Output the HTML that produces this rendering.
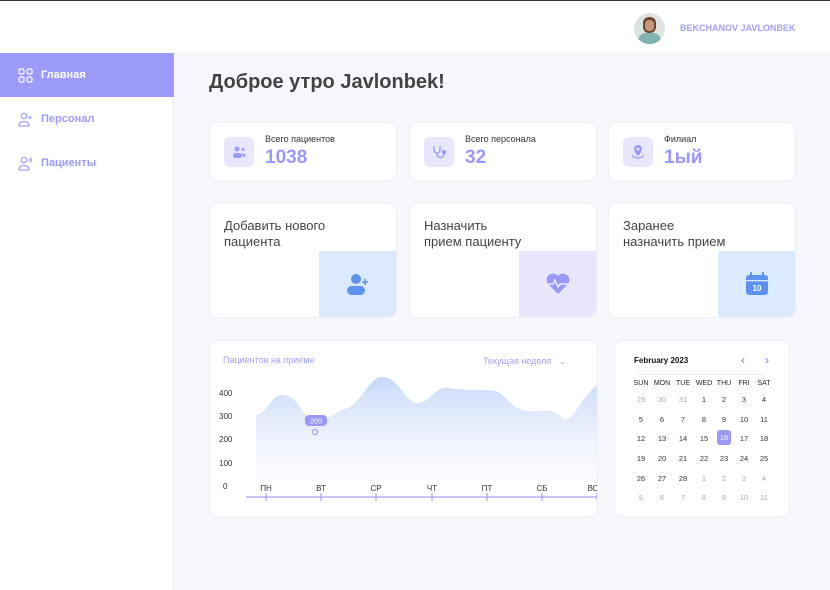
<!DOCTYPE html>
<html><head><meta charset="utf-8"><style>
*{margin:0;padding:0;box-sizing:border-box}
body{width:830px;height:590px;overflow:hidden;font-family:"Liberation Sans",sans-serif;background:#f7f7fd;position:relative}
.hdr{position:absolute;left:0;top:0;width:830px;height:52px;background:#fff;border-top:1px solid #333}
.side{position:absolute;left:0;top:52px;width:174px;height:538px;background:#fff;border-right:1px solid #ececf5}
.nav{position:absolute;left:0;width:174px;height:44px;display:flex;align-items:center;padding-left:18px;font-size:11px;font-weight:bold;color:#9d9bfb}
.nav svg{margin-right:8px}
.card{position:absolute;background:#fff;border-radius:8px;border:1px solid #eeeef6}
.ic{position:absolute;left:14px;top:14px;width:30px;height:30px;border-radius:6px;background:#e8e7fd;display:flex;align-items:center;justify-content:center}
.lbl{position:absolute;left:55px;top:11px;font-size:9px;color:#333}
.num{position:absolute;left:55px;top:24px;font-size:19px;font-weight:bold;color:#9a98f8}
.at{position:absolute;left:14px;top:14px;font-size:13px;color:#444;line-height:16px}
.box{position:absolute;right:0;bottom:0;width:77px;height:66px;border-radius:0 0 8px 0;display:flex;align-items:center;justify-content:center}
.cal{font-size:7.5px;color:#333}
.cal span{position:absolute;width:20px;text-align:center}
.g{color:#aaa!important}
</style></head><body>
<div class="hdr">
<div style="position:absolute;left:634px;top:12px;width:31px;height:31px;border-radius:50%;background:#dfe3e0;overflow:hidden">
<div style="position:absolute;left:9px;top:4px;width:13px;height:16px;border-radius:6px;background:#6a4431"></div>
<div style="position:absolute;left:11px;top:7px;width:9px;height:11px;border-radius:4px;background:#c9957a"></div>
<div style="position:absolute;left:4px;top:20px;width:23px;height:14px;border-radius:8px 8px 0 0;background:#7fb3b0"></div>
</div>
<div style="position:absolute;left:680px;top:22px;font-size:9px;font-weight:bold;color:#a3a1fb">BEKCHANOV JAVLONBEK</div>
</div>
<div class="side">
<div class="nav" style="top:1px;background:#9c9afb;color:#fff"><svg width="15" height="15" viewBox="0 0 15 15" fill="none" stroke="#fff" stroke-width="1.2"><rect x="1" y="1" width="5" height="5" rx="1.5"/><rect x="9" y="1" width="5" height="5" rx="1.5"/><rect x="1" y="9" width="5" height="5" rx="1.5"/><rect x="9" y="9" width="5" height="5" rx="1.5"/></svg>Главная</div>
<div class="nav" style="top:45px"><svg width="15" height="15" viewBox="0 0 15 15" fill="none" stroke="#a3a1fb" stroke-width="1.2"><circle cx="6" cy="4" r="2.8"/><path d="M1 14c0-3 2-4.5 5-4.5s5 1.5 5 4.5z"/><path d="M12 4v3M10.5 5.5h3"/></svg>Персонал</div>
<div class="nav" style="top:89px"><svg width="15" height="15" viewBox="0 0 15 15" fill="none" stroke="#a3a1fb" stroke-width="1.2"><circle cx="6" cy="4" r="2.8"/><path d="M1 14c0-3 2-4.5 5-4.5s5 1.5 5 4.5z"/><path d="M11 2.5q1 1.5 0 3M12.5 1.5q2 2.5 0 5"/></svg>Пациенты</div>
</div>
<div style="position:absolute;left:209px;top:71px;font-size:20px;font-weight:bold;color:#444">Доброе утро Javlonbek!</div>

<div class="card" style="left:209px;top:122px;width:188px;height:59px"><div class="ic"><svg width="14" height="14" viewBox="0 0 14 14" fill="#9a98f8"><circle cx="5" cy="4" r="2.5"/><rect x="1" y="8" width="9" height="5" rx="2.5"/><circle cx="11" cy="4.5" r="1.5"/><rect x="10.5" y="8.5" width="3" height="3.5" rx="1.5"/></svg></div><div class="lbl">Всего пациентов</div><div class="num">1038</div></div>
<div class="card" style="left:409px;top:122px;width:188px;height:59px"><div class="ic"><svg width="16" height="16" viewBox="0 0 16 16" fill="none" stroke="#9a98f8" stroke-width="1.3"><path d="M3 2v4a3 3 0 0 0 6 0V2"/><path d="M6 9v1a3.5 3.5 0 0 0 7 0V9"/><circle cx="13" cy="8" r="1.5" fill="#9a98f8"/></svg></div><div class="lbl">Всего персонала</div><div class="num">32</div></div>
<div class="card" style="left:608px;top:122px;width:188px;height:59px"><div class="ic"><svg width="16" height="16" viewBox="0 0 16 16"><path d="M8 1a4 4 0 0 1 4 4c0 3-4 7-4 7s-4-4-4-7a4 4 0 0 1 4-4z" fill="#9a98f8"/><circle cx="8" cy="5" r="1.5" fill="#e8e7fd"/><path d="M3 11q-2 2 5 3q7-1 5-3" fill="none" stroke="#9a98f8" stroke-width="1.2"/></svg></div><div class="lbl">Филиал</div><div class="num">1ый</div></div>

<div class="card" style="left:209px;top:203px;width:188px;height:115px"><div class="at">Добавить нового<br>пациента</div><div class="box" style="background:#dbe9fd"><svg width="26" height="26" viewBox="0 0 26 26" fill="#5d92ee"><circle cx="11" cy="8" r="5"/><rect x="2" y="15" width="18" height="9" rx="4.5"/><path d="M20 8v6M17 11h6" stroke="#5d92ee" stroke-width="1.6"/></svg></div></div>
<div class="card" style="left:409px;top:203px;width:188px;height:115px"><div class="at">Назначить<br>прием пациенту</div><div class="box" style="background:#e8e7fd"><svg width="26" height="24" viewBox="0 0 26 24"><path d="M13 22L3 12a6 6 0 0 1 10-8 6 6 0 0 1 10 8z" fill="#9a98f8"/><path d="M2 12h6l2-4 3 7 2-3h9" fill="none" stroke="#e8e7fd" stroke-width="1.6"/></svg></div></div>
<div class="card" style="left:608px;top:203px;width:188px;height:115px"><div class="at">Заранее<br>назначить прием</div><div class="box" style="background:#dbe9fd"><svg width="26" height="26" viewBox="0 0 26 26"><rect x="2" y="4" width="22" height="20" rx="3" fill="#5d92ee"/><rect x="6" y="1" width="2" height="5" rx="1" fill="#5d92ee"/><rect x="18" y="1" width="2" height="5" rx="1" fill="#5d92ee"/><rect x="2" y="9" width="22" height="1.3" fill="#dbe9fd"/><text x="13" y="20" font-size="8" font-weight="bold" fill="#fff" text-anchor="middle" font-family="Liberation Sans">10</text></svg></div></div>

<div class="card" style="left:209px;top:340px;width:389px;height:177px;overflow:hidden">
<div style="position:absolute;left:13px;top:14px;font-size:9px;color:#a3a1fb">Пациентов на приеме</div>
<div style="position:absolute;left:273px;top:15px;font-size:9px;color:#a3a1fb">Текущая неделя &nbsp; ⌄</div>
<svg width="389" height="177" style="position:absolute;left:0;top:0">
<defs><linearGradient id="gr" x1="0" y1="0" x2="0" y2="1"><stop offset="0" stop-color="#c6d9f8"/><stop offset="1" stop-color="#f4f3fe" stop-opacity=".3"/></linearGradient></defs>
<path d="M46 74C58 72 60 54 72 54C90 54 95 80 105 86C120 74 130 70 140 66C155 55 160 36 172 36C190 36 195 63 208 62C220 62 225 45 238 47C260 50 270 48 285 50C300 54 298 73 330 70C340 69 345 70 352 77C362 86 370 55 389 43V140H46Z" fill="url(#gr)"/>
<rect x="95" y="74" width="22" height="11" rx="4" fill="#9a98f8"/><text x="106" y="82.5" font-size="7" fill="#fff" text-anchor="middle" font-family="Liberation Sans">200</text>
<circle cx="105" cy="91" r="2.5" fill="#fff" stroke="#9a98f8" stroke-width="1.2"/>
<g font-size="8" fill="#333" font-family="Liberation Sans"><text x="9" y="55">400</text><text x="9" y="78">300</text><text x="9" y="101">200</text><text x="9" y="125">100</text><text x="13" y="148">0</text>
<g text-anchor="middle"><text x="56" y="150">ПН</text><text x="111" y="150">ВТ</text><text x="166" y="150">СР</text><text x="222" y="150">ЧТ</text><text x="277" y="150">ПТ</text><text x="332" y="150">СБ</text><text x="383" y="150">ВС</text></g></g>
<line x1="36" y1="156" x2="389" y2="156" stroke="#a3a1fb" stroke-width="1.3"/>
<g stroke="#a3a1fb" stroke-width="1.2"><line x1="56" y1="152" x2="56" y2="160"/><line x1="111" y1="152" x2="111" y2="160"/><line x1="166" y1="152" x2="166" y2="160"/><line x1="222" y1="152" x2="222" y2="160"/><line x1="277" y1="152" x2="277" y2="160"/><line x1="332" y1="152" x2="332" y2="160"/><line x1="387" y1="152" x2="387" y2="160"/></g>
</svg></div>

<div class="card cal" style="left:614px;top:340px;width:176px;height:177px">
<div style="position:absolute;left:19px;top:15px;font-size:8px;font-weight:bold;color:#111">February 2023</div>
<div style="position:absolute;left:126px;top:12px;font-size:12px;color:#7b78e8">‹ &nbsp;&nbsp;&nbsp;&nbsp; ›</div>
<div style="position:absolute;left:22px;top:33px;width:128px;height:1px;background:#eee"></div>
<div id="g"></div>
</div>
<script>
var cols=[26,47,68,89,109,129,149],c=document.getElementById('g'),h='';
var hd=['SUN','MON','TUE','WED','THU','FRI','SAT'];
hd.forEach(function(d,i){h+='<span style="left:'+(cols[i]-10)+'px;top:39px;color:#222;font-size:7px">'+d+'</span>'});
var days=[29,30,31],i;for(i=1;i<=28;i++)days.push(i);for(i=1;i<=11;i++)days.push(i);
var ys=[54,74,93,113,133,152];
days.forEach(function(d,k){var r=Math.floor(k/7),cl=k%7;var g=(k<3||k>=31);
if(k==18)h+='<span style="left:'+(cols[cl]-7)+'px;top:'+(ys[r]-4)+'px;height:15px;line-height:15px;width:14px;background:#9a98f8;color:#fff;border-radius:3px">'+d+'</span>';
else h+='<span class="'+(g?'g':'')+'" style="left:'+(cols[cl]-10)+'px;top:'+ys[r]+'px">'+d+'</span>';});
c.innerHTML=h;
</script>
</body></html>
